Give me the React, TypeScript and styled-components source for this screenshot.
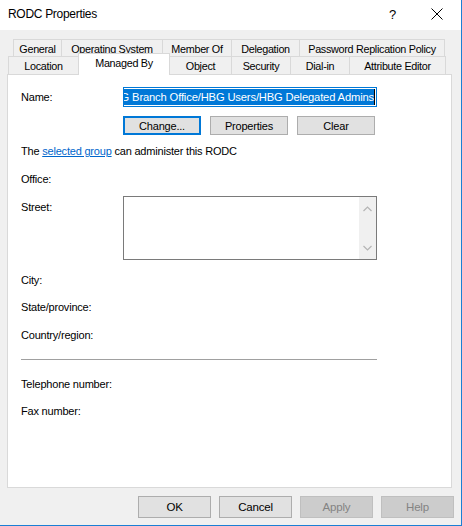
import React from 'react';
import styled, { createGlobalStyle } from 'styled-components';

const BACK_TABS = [
  { label: 'General', w: 49 },
  { label: 'Operating System', w: 102 },
  { label: 'Member Of', w: 70 },
  { label: 'Delegation', w: 69 },
  { label: 'Password Replication Policy', w: 146 },
];

const FRONT_TABS = [
  { label: 'Location', w: 71 },
  { label: 'Managed By', w: 92, active: true },
  { label: 'Object', w: 63 },
  { label: 'Security', w: 60 },
  { label: 'Dial-in', w: 60 },
  { label: 'Attribute Editor', w: 97 },
];

const GlobalStyle = createGlobalStyle`
  html, body {
    margin: 0;
    padding: 0;
    background: #ffffff;
  }
  * {
    box-sizing: border-box;
  }
`;

const App = () => {
  return (
    <>
      <GlobalStyle />
      <Window>
        <TitleBar>
          <Title>RODC Properties</Title>
          <HelpGlyph>?</HelpGlyph>
          <CloseIcon width="12" height="12" viewBox="0 0 12 12">
            <path d="M0.5 0.5 L11.5 11.5 M11.5 0.5 L0.5 11.5" stroke="#000" strokeWidth="1" fill="none" />
          </CloseIcon>
        </TitleBar>
        <Content>
          <BackRow>
            {BACK_TABS.map(t => (
              <Tab key={t.label} $w={t.w}>
                {t.label}
              </Tab>
            ))}
          </BackRow>
          <FrontRow>
            {FRONT_TABS.map(t =>
              t.active ? (
                <ActiveTab key={t.label} $w={t.w}>
                  {t.label}
                </ActiveTab>
              ) : (
                <Tab key={t.label} $w={t.w}>
                  {t.label}
                </Tab>
              )
            )}
          </FrontRow>
          <Panel>
            <NameRow>
              <Label>Name:</Label>
              <NameBox>
                <Selected>HBG Branch Office/HBG Users/HBG Delegated Admins</Selected>
                <Caret />
              </NameBox>
            </NameRow>
            <ButtonRow>
              <SmallButton $focused>Change...</SmallButton>
              <SmallButton>Properties</SmallButton>
              <SmallButton>Clear</SmallButton>
            </ButtonRow>
            <Note>
              The <LinkText>selected group</LinkText> can administer this RODC
            </Note>
            <Label $mt={14}>Office:</Label>
            <StreetRow>
              <StreetLabel>Street:</StreetLabel>
              <StreetBox>
                <ScrollTrack>
                  <svg width="9" height="6" viewBox="0 0 9 6">
                    <path d="M0.5 5 L4.5 1 L8.5 5" stroke="#b4b4b4" strokeWidth="1.2" fill="none" />
                  </svg>
                  <svg width="9" height="6" viewBox="0 0 9 6">
                    <path d="M0.5 1 L4.5 5 L8.5 1" stroke="#b4b4b4" strokeWidth="1.2" fill="none" />
                  </svg>
                </ScrollTrack>
              </StreetBox>
            </StreetRow>
            <Label $mt={13}>City:</Label>
            <Label $mt={13}>State/province:</Label>
            <Label $mt={14}>Country/region:</Label>
            <Separator />
            <Label $mt={17}>Telephone number:</Label>
            <Label $mt={13}>Fax number:</Label>
          </Panel>
          <Footer>
            <DialogButton>OK</DialogButton>
            <DialogButton>Cancel</DialogButton>
            <DialogButton disabled>Apply</DialogButton>
            <DialogButton disabled>Help</DialogButton>
          </Footer>
        </Content>
      </Window>
    </>
  );
};

export default App;

const Window = styled.div`
  width: 462px;
  height: 526px;
  display: flex;
  flex-direction: column;
  background: #f0f0f0;
  border-right: 1px solid #1b7fd4;
  border-bottom: 1px solid #1b7fd4;
  font-family: 'Liberation Sans', Arial, sans-serif;
  font-size: 11px;
  letter-spacing: -0.2px;
  color: #000;
`;

const TitleBar = styled.div`
  height: 30px;
  display: flex;
  align-items: center;
  background: #ffffff;
  padding-left: 8px;
`;

const Title = styled.div`
  flex: 1;
  font-size: 12px;
  letter-spacing: -0.3px;
  margin-top: -2px;
`;

const HelpGlyph = styled.div`
  font-size: 13px;
  width: 12px;
  margin-right: 30px;
  margin-top: -2px;
`;

const CloseIcon = styled.svg`
  margin-right: 18px;
  margin-top: -3px;
`;

const Content = styled.div`
  flex: 1;
  display: flex;
  flex-direction: column;
  padding: 9px 7px 0 7px;
`;

const BackRow = styled.div`
  display: flex;
  height: 17px;
  padding-left: 6px;
`;

const FrontRow = styled.div`
  display: flex;
  height: 18px;
  padding-left: 1px;
`;

const Tab = styled.div<{ $w: number }>`
  width: ${p => p.$w}px;
  flex-shrink: 0;
  display: flex;
  align-items: center;
  justify-content: center;
  background: #f0f0f0;
  border: 1px solid #d9d9d9;
  border-bottom: none;
  margin-right: -1px;
  white-space: nowrap;
  padding-top: 1px;
  font-size: 10.8px;
  letter-spacing: -0.3px;
`;

const ActiveTab = styled(Tab)`
  position: relative;
  z-index: 2;
  height: 22px;
  margin-top: -3px;
  background: #ffffff;
  padding-top: 0;
  padding-bottom: 4px;
`;

const Panel = styled.div`
  height: 414px;
  margin-right: 2px;
  background: #ffffff;
  border: 1px solid #d9d9d9;
  padding: 0 0 0 13px;
  display: flex;
  flex-direction: column;
`;

const Label = styled.div<{ $mt?: number }>`
  line-height: 14px;
  height: 14px;
  margin-top: ${p => p.$mt ?? 0}px;
  white-space: nowrap;
`;

const NameRow = styled.div`
  display: flex;
  align-items: center;
  margin-top: 12px;
  height: 20px;
  & > ${Label} {
    width: 102px;
  }
`;

const NameBox = styled.div`
  width: 254px;
  height: 20px;
  border: 1px solid #0078d7;
  padding: 1px;
  display: flex;
  justify-content: flex-end;
  align-items: stretch;
  overflow: hidden;
`;

const Selected = styled.span`
  background: #0078d7;
  color: #ffffff;
  white-space: nowrap;
  line-height: 16px;
  font-size: 11.2px;
  letter-spacing: -0.15px;
  flex-shrink: 0;
`;

const Caret = styled.span`
  width: 1px;
  flex-shrink: 0;
  background: #000;
`;

const ButtonRow = styled.div`
  display: flex;
  gap: 9px;
  margin-top: 9px;
  padding-left: 102px;
`;

const SmallButton = styled.div<{ $focused?: boolean }>`
  width: 78px;
  height: 19px;
  display: flex;
  align-items: center;
  justify-content: center;
  background: #e1e1e1;
  border: ${p => (p.$focused ? '2px solid #0078d7' : '1px solid #adadad')};
`;

const Note = styled.div`
  line-height: 14px;
  margin-top: 9px;
`;

const LinkText = styled.span`
  color: #0066cc;
  text-decoration: underline;
`;

const StreetRow = styled.div`
  display: flex;
  margin-top: 10px;
`;

const StreetLabel = styled(Label)`
  width: 102px;
  margin-top: 4px;
`;

const StreetBox = styled.div`
  width: 254px;
  height: 64px;
  border: 1px solid #7a7a7a;
  display: flex;
  justify-content: flex-end;
`;

const ScrollTrack = styled.div`
  width: 17px;
  background: #f0f0f0;
  display: flex;
  flex-direction: column;
  align-items: center;
  justify-content: space-between;
  padding: 9px 0 8px;
`;

const Separator = styled.div`
  width: 356px;
  height: 1px;
  background: #a0a0a0;
  margin-top: 17px;
`;

const Footer = styled.div`
  display: flex;
  justify-content: flex-end;
  gap: 8px;
  margin-top: 8px;
`;

const DialogButton = styled.div<{ disabled?: boolean }>`
  width: 73px;
  height: 22px;
  display: flex;
  align-items: center;
  justify-content: center;
  background: ${p => (p.disabled ? '#cccccc' : '#e1e1e1')};
  color: ${p => (p.disabled ? '#838383' : '#000000')};
  border: 1px solid ${p => (p.disabled ? '#bfbfbf' : '#adadad')};
  font-size: 11.5px;
`;
